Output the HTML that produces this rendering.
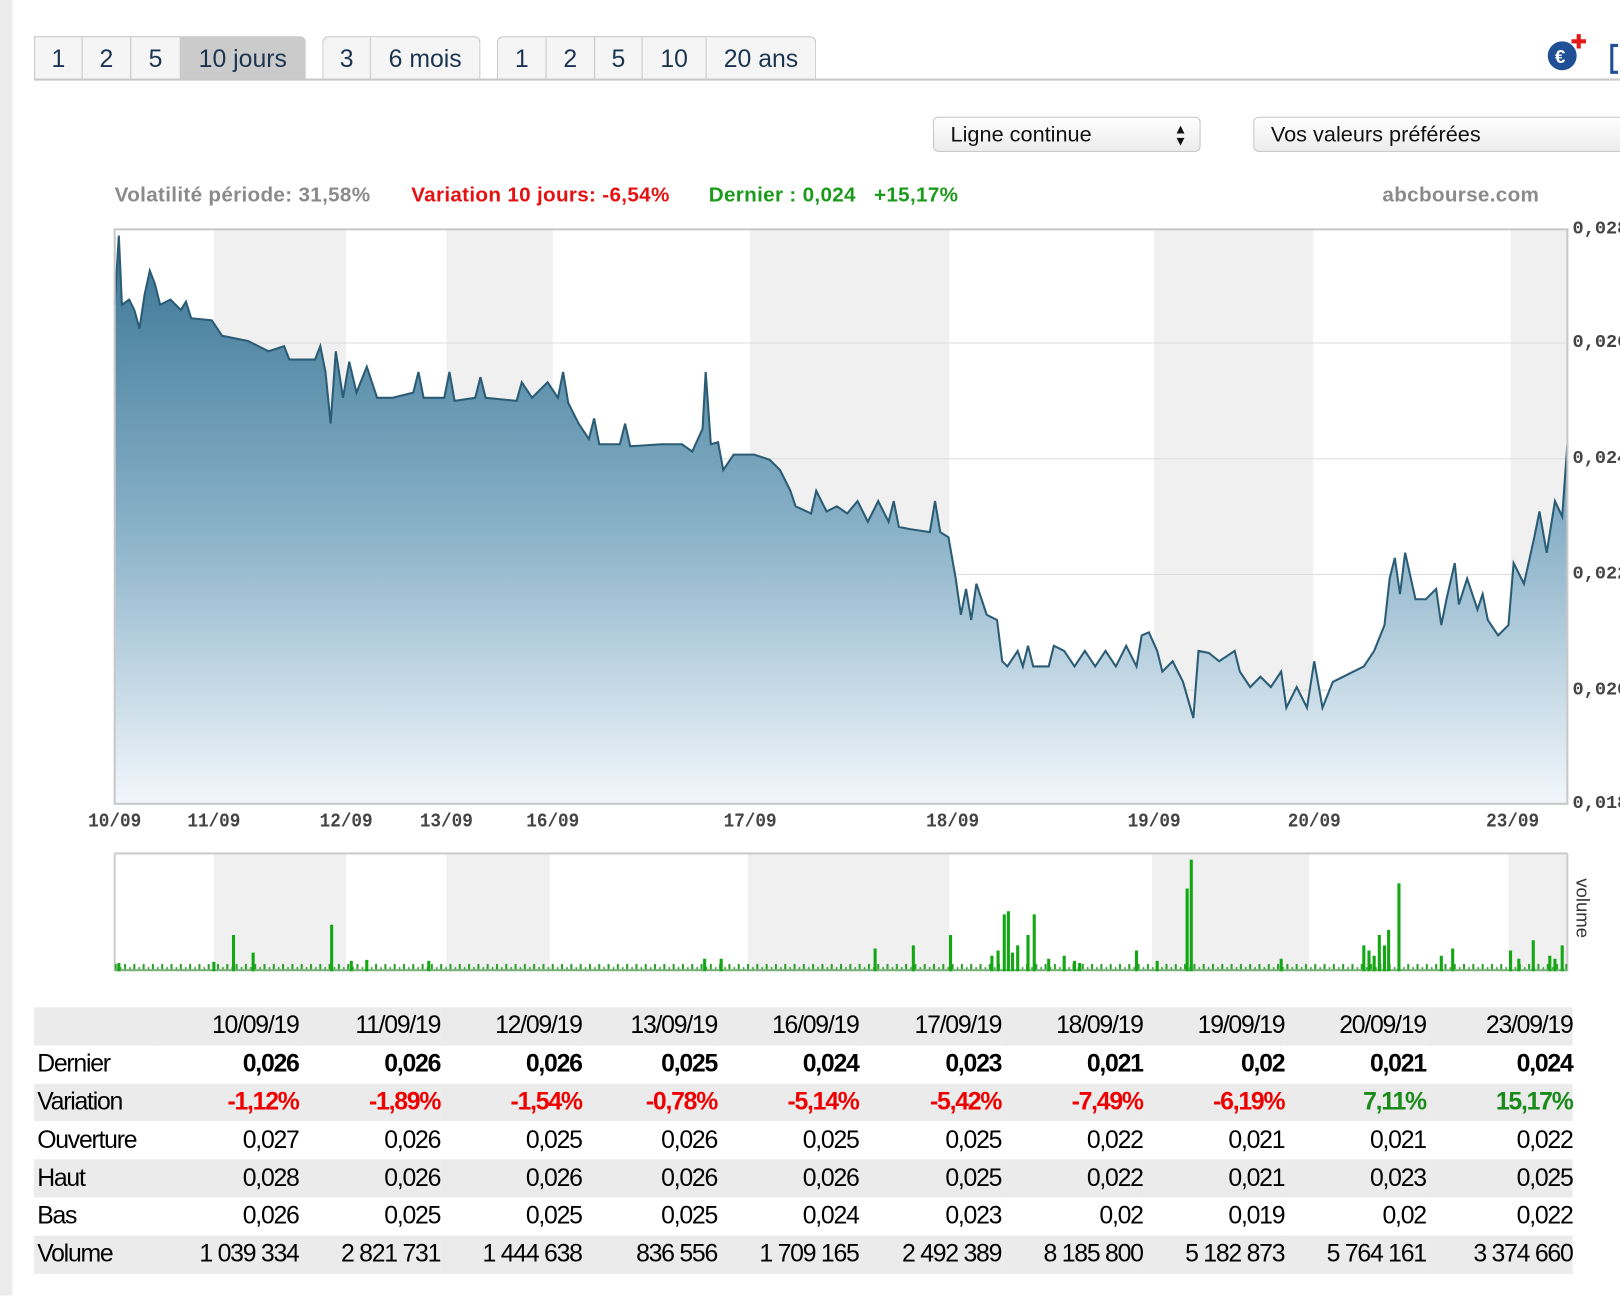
<!DOCTYPE html>
<html><head><meta charset="utf-8"><style>
html,body{margin:0;padding:0;background:#fff;overflow:hidden;width:1620px;height:1296px}
#w{position:absolute;left:0;top:0;width:1568px;height:1254px;transform:scale(1.0332);transform-origin:0 0;font-family:"Liberation Sans",sans-serif}
.strip{position:absolute;left:0;top:0;width:12px;height:1254px;background:#ececec}
.tab{position:absolute;top:35px;height:41px;border:1px solid #c8c8c8;border-bottom:none;background:#f5f5f5;color:#1b3550;font-size:24px;line-height:44px;text-align:center;box-sizing:border-box}
.tline{position:absolute;left:33px;top:76px;width:1540px;height:2px;background:#c8c8c8}
.sel{position:absolute;top:113px;height:34px;border:1px solid #c4c4c4;border-radius:5px;background:linear-gradient(#fff,#ececec);font-size:21px;line-height:33px;padding-left:16px;box-sizing:border-box;color:#111}
.st{position:absolute;top:178px;font-size:20px;font-weight:bold;letter-spacing:0.3px}
.ax{position:absolute;left:1522px;font:bold 18px "Liberation Mono",monospace;color:#444}
.dt{position:absolute;top:784px;font:bold 19px "Liberation Mono",monospace;color:#444;transform:translateX(-50%) scaleX(.9)}
table{position:absolute;left:33px;top:975px;width:1489px;border-collapse:collapse;font-size:24px;letter-spacing:-1.2px;table-layout:fixed}
td{height:36.8px;padding:0;text-align:right;white-space:nowrap}
td:first-child{text-align:left;padding-left:3px}
tr.g{background:#ebebeb}
.r{color:#e00;font-weight:bold}.gr{color:#1a8a1a;font-weight:bold}
</style></head><body><div id="w">
<div class="strip"></div>
<div class="tab" style="left:33px;width:47px">1</div>
<div class="tab" style="left:79px;width:48px">2</div>
<div class="tab" style="left:126px;width:49px">5</div>
<div class="tab" style="left:174px;width:122px;background:#cbcbcb;border-radius:0 6px 0 0">10 jours</div>
<div class="tab" style="left:312px;width:47px;border-radius:6px 0 0 0">3</div>
<div class="tab" style="left:358px;width:107px;border-radius:0 6px 0 0">6 mois</div>
<div class="tab" style="left:481px;width:48px;border-radius:6px 0 0 0">1</div>
<div class="tab" style="left:528px;width:48px">2</div>
<div class="tab" style="left:575px;width:47px">5</div>
<div class="tab" style="left:621px;width:63px">10</div>
<div class="tab" style="left:683px;width:107px;border-radius:0 6px 0 0">20 ans</div>
<div class="tline"></div>
<svg style="position:absolute;left:1494px;top:30px" width="74" height="44">
<circle cx="18" cy="24" r="14" fill="#1f4f95"/><text x="11" y="31" font-size="18" font-weight="bold" fill="#fff" font-family="Liberation Sans">€</text>
<path d="M34 3v14M27 10h14" stroke="#e51818" stroke-width="4"/>
<path d="M72 14h-6v26h6" stroke="#1f4f95" stroke-width="3" fill="none"/></svg>
<div class="sel" style="left:903px;width:259px">Ligne continue<span style="position:absolute;right:12px;top:0;font-size:13px;line-height:12px;padding-top:5px">▲<br>▼</span></div>
<div class="sel" style="left:1213px;width:370px">Vos valeurs préférées</div>
<div class="st" style="left:111px;color:#8a8a8a">Volatilité période: 31,58%</div>
<div class="st" style="left:398px;color:#e51010">Variation 10 jours: -6,54%</div>
<div class="st" style="left:686px;color:#1c9a1c">Dernier : 0,024 &nbsp;&nbsp;+15,17%</div>
<div class="st" style="left:1338px;color:#8a8a8a">abcbourse.com</div>
<svg style="position:absolute;left:0;top:0" width="1568" height="960">
<defs><linearGradient id="gd" x1="0" y1="0" x2="0" y2="1"><stop offset="0" stop-color="#3a7594"/><stop offset="0.5" stop-color="#86afc6"/><stop offset="1" stop-color="#f2f7fc"/></linearGradient>
<pattern id="tk" x="111" y="0" width="9" height="960" patternUnits="userSpaceOnUse"><rect x="0" y="933" width="2" height="7" fill="#2aa02a"/><rect x="5" y="936" width="1.5" height="4" fill="#2aa02a"/></pattern></defs>
<g fill="#f0f0f0"><rect x="207" y="222" width="128" height="556"/><rect x="432" y="222" width="103" height="556"/><rect x="726" y="222" width="193" height="556"/><rect x="1117" y="222" width="154" height="556"/><rect x="1462" y="222" width="55" height="556"/>
<rect x="207" y="826" width="128" height="114"/><rect x="432" y="826" width="100" height="114"/><rect x="724" y="826" width="195" height="114"/><rect x="1115" y="826" width="152" height="114"/><rect x="1460" y="826" width="57" height="114"/></g>
<g stroke="#ddd"><path d="M111 332H1517M111 444H1517M111 556H1517M111 668H1517"/></g>
<path fill="url(#gd)" stroke="none" d="M111 778L111 295L115 228L118 295L125 290L130 300L135 318L140 285L145 262L150 275L155 295L165 290L175 300L180 292L185 308L205 310L215 325L240 330L260 340L275 335L280 348L305 348L310 335L315 360L320 410L325 340L332 385L338 350L345 380L355 355L365 385L380 385L400 380L405 360L410 385L430 385L435 360L440 388L460 385L465 365L470 385L500 388L505 370L515 385L530 370L540 385L545 360L550 390L560 410L570 425L575 405L580 430L600 430L605 410L610 432L640 430L660 430L670 437L680 415L683 360L688 430L695 428L700 455L710 440L730 440L745 445L755 455L765 475L770 490L785 497L790 475L800 495L810 490L820 497L830 485L840 505L850 485L860 505L865 485L870 510L880 512L900 515L905 485L910 515L918 520L925 560L930 595L935 570L940 600L945 565L955 595L965 600L970 640L975 645L985 630L990 645L995 625L1000 645L1015 645L1020 625L1030 630L1040 645L1050 630L1060 645L1070 630L1080 645L1090 625L1100 645L1105 615L1112 612L1120 630L1125 650L1135 640L1145 660L1155 695L1160 630L1170 632L1180 640L1195 630L1200 650L1210 665L1220 655L1230 665L1240 650L1245 685L1255 665L1265 685L1272 640L1280 685L1290 660L1310 650L1320 645L1330 630L1340 605L1345 560L1350 540L1355 575L1360 535L1370 580L1380 580L1390 570L1395 605L1400 580L1408 545L1412 585L1420 560L1430 590L1435 575L1440 600L1450 615L1460 605L1465 545L1475 565L1485 520L1490 495L1497 535L1505 485L1512 500L1517 430L1517 778Z"/>
<path fill="none" stroke="#2b5c75" stroke-width="2" d="M111 295L115 228L118 295L125 290L130 300L135 318L140 285L145 262L150 275L155 295L165 290L175 300L180 292L185 308L205 310L215 325L240 330L260 340L275 335L280 348L305 348L310 335L315 360L320 410L325 340L332 385L338 350L345 380L355 355L365 385L380 385L400 380L405 360L410 385L430 385L435 360L440 388L460 385L465 365L470 385L500 388L505 370L515 385L530 370L540 385L545 360L550 390L560 410L570 425L575 405L580 430L600 430L605 410L610 432L640 430L660 430L670 437L680 415L683 360L688 430L695 428L700 455L710 440L730 440L745 445L755 455L765 475L770 490L785 497L790 475L800 495L810 490L820 497L830 485L840 505L850 485L860 505L865 485L870 510L880 512L900 515L905 485L910 515L918 520L925 560L930 595L935 570L940 600L945 565L955 595L965 600L970 640L975 645L985 630L990 645L995 625L1000 645L1015 645L1020 625L1030 630L1040 645L1050 630L1060 645L1070 630L1080 645L1090 625L1100 645L1105 615L1112 612L1120 630L1125 650L1135 640L1145 660L1155 695L1160 630L1170 632L1180 640L1195 630L1200 650L1210 665L1220 655L1230 665L1240 650L1245 685L1255 665L1265 685L1272 640L1280 685L1290 660L1310 650L1320 645L1330 630L1340 605L1345 560L1350 540L1355 575L1360 535L1370 580L1380 580L1390 570L1395 605L1400 580L1408 545L1412 585L1420 560L1430 590L1435 575L1440 600L1450 615L1460 605L1465 545L1475 565L1485 520L1490 495L1497 535L1505 485L1512 500L1517 430"/>
<path d="M111 222H1517V778H111Z" fill="none" stroke="#c8c8c8" stroke-width="2"/>
<path d="M111 826H1517M111 826V940M1517 826V940" fill="none" stroke="#ccc" stroke-width="2"/>
<rect x="111" y="930" width="1406" height="10" fill="url(#tk)"/>
<rect x="111" y="938" width="1406" height="2" fill="#7bb07b"/>
<g stroke="#13a813" stroke-width="3" fill="none"><path d="M115 940v-8M207 940v-9M226 940v-35M245 940v-18M321 940v-45M340 940v-10M355 940v-11M415 940v-10M682 940v-12M698 940v-12M847 940v-22M884 940v-25M920 940v-35M972 940v-55M976 940v-58M985 940v-25M995 940v-35M1001 940v-55M1030 940v-15M1100 940v-20M1149 940v-80M1153 940v-108M1240 940v-12M1320 940v-25M1335 940v-35M1344 940v-40M1354 940v-85M1406 940v-22M1462 940v-20M1484 940v-30M1512 940v-25M960 940v-15M1015 940v-12M1120 940v-10M1395 940v-15M1325 940v-20M1330 940v-15M1340 940v-25M1470 940v-12M1500 940v-15M1505 940v-12M966 940v-20M980 940v-18M1040 940v-10M1045 940v-8"/></g>
<text transform="translate(1526,850) rotate(90)" font-size="18" fill="#333" font-family="Liberation Sans">volume</text>
</svg>
<div class="ax" style="top:212px">0,028</div><div class="ax" style="top:322px">0,026</div><div class="ax" style="top:434px">0,024</div><div class="ax" style="top:546px">0,022</div><div class="ax" style="top:658px">0,020</div><div class="ax" style="top:768px">0,018</div>
<div class="dt" style="left:111px">10/09</div><div class="dt" style="left:207px">11/09</div><div class="dt" style="left:335px">12/09</div><div class="dt" style="left:432px">13/09</div><div class="dt" style="left:535px">16/09</div><div class="dt" style="left:726px">17/09</div><div class="dt" style="left:922px">18/09</div><div class="dt" style="left:1117px">19/09</div><div class="dt" style="left:1272px">20/09</div><div class="dt" style="left:1464px">23/09</div>
<table>
<colgroup><col style="width:117px"><col style="width:139px"><col style="width:137px"><col style="width:137px"><col style="width:131px"><col style="width:137px"><col style="width:138px"><col style="width:137px"><col style="width:137px"><col style="width:137px"><col style="width:142px"></colgroup>
<tr class="g"><td></td><td>10/09/19</td><td>11/09/19</td><td>12/09/19</td><td>13/09/19</td><td>16/09/19</td><td>17/09/19</td><td>18/09/19</td><td>19/09/19</td><td>20/09/19</td><td>23/09/19</td></tr>
<tr><td>Dernier</td><td><b>0,026</b></td><td><b>0,026</b></td><td><b>0,026</b></td><td><b>0,025</b></td><td><b>0,024</b></td><td><b>0,023</b></td><td><b>0,021</b></td><td><b>0,02</b></td><td><b>0,021</b></td><td><b>0,024</b></td></tr>
<tr class="g"><td>Variation</td><td class="r">-1,12%</td><td class="r">-1,89%</td><td class="r">-1,54%</td><td class="r">-0,78%</td><td class="r">-5,14%</td><td class="r">-5,42%</td><td class="r">-7,49%</td><td class="r">-6,19%</td><td class="gr">7,11%</td><td class="gr">15,17%</td></tr>
<tr><td>Ouverture</td><td>0,027</td><td>0,026</td><td>0,025</td><td>0,026</td><td>0,025</td><td>0,025</td><td>0,022</td><td>0,021</td><td>0,021</td><td>0,022</td></tr>
<tr class="g"><td>Haut</td><td>0,028</td><td>0,026</td><td>0,026</td><td>0,026</td><td>0,026</td><td>0,025</td><td>0,022</td><td>0,021</td><td>0,023</td><td>0,025</td></tr>
<tr><td>Bas</td><td>0,026</td><td>0,025</td><td>0,025</td><td>0,025</td><td>0,024</td><td>0,023</td><td>0,02</td><td>0,019</td><td>0,02</td><td>0,022</td></tr>
<tr class="g"><td>Volume</td><td>1 039 334</td><td>2 821 731</td><td>1 444 638</td><td>836 556</td><td>1 709 165</td><td>2 492 389</td><td>8 185 800</td><td>5 182 873</td><td>5 764 161</td><td>3 374 660</td></tr>
</table>
</div></body></html>
